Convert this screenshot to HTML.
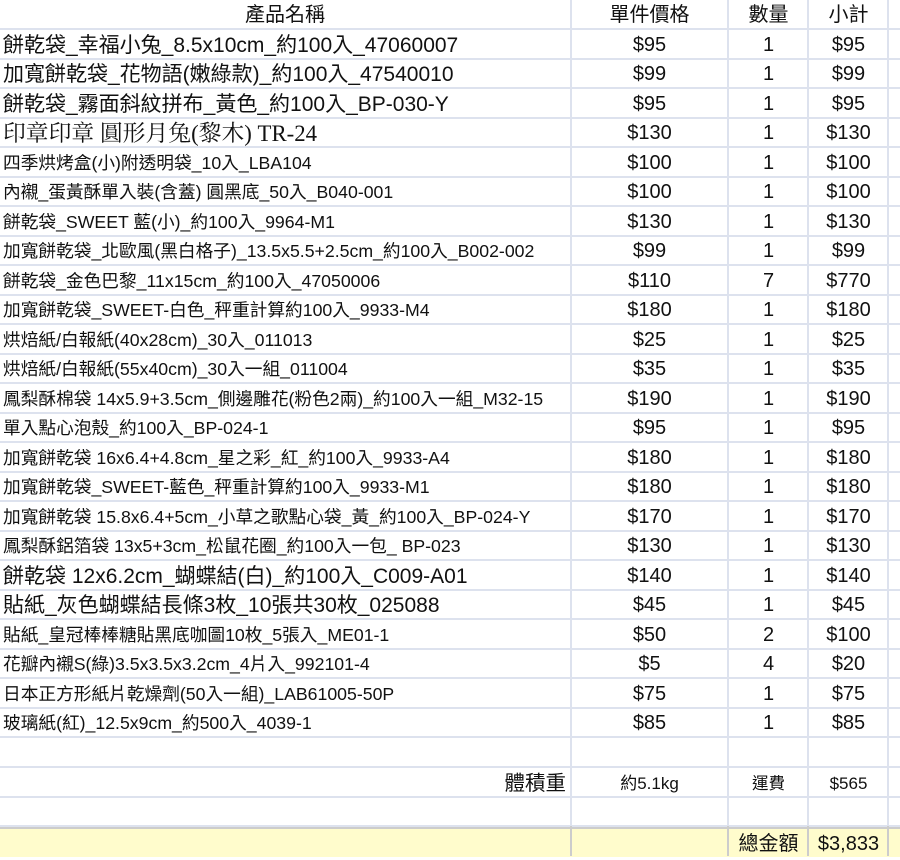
<!DOCTYPE html><html><head><meta charset="utf-8"><style>
body{margin:0;width:900px;height:856px;overflow:hidden;background:#fff;font-family:"Liberation Sans","Noto Sans CJK TC",sans-serif;color:#111;position:relative}
.r{position:absolute;left:0;width:900px;height:28px;border-bottom:2px solid #dde2ee}
.c{position:absolute;top:0;height:28px;line-height:31px;white-space:nowrap}
.n{left:3px;width:565px}
.p{left:572px;width:155px;text-align:center;font-size:20px}
.q{left:730px;width:77px;text-align:center;font-size:20px}
.s{left:810px;width:77px;text-align:center;font-size:20px}
.v{position:absolute;top:0;height:856px;width:2px;background:#dde2ee}
.b{font-size:21px}.m{font-size:17.7px}
</style></head><body>
<div class="v" style="left:570px"></div><div class="v" style="left:727px"></div><div class="v" style="left:807px"></div><div class="v" style="left:887px"></div>
<div id="t"></div>
<script>
var rows=[
["<span style='display:block;text-align:center;width:570px;margin-left:-3px;font-size:20px'>產品名稱</span>","<span style='font-size:20px'>單件價格</span>","<span style='font-size:20px'>數量</span>","<span style='font-size:20px'>小計</span>",""],
["餅乾袋_幸福小兔_8.5x10cm_約100入_47060007","$95","1","$95","b"],
["加寬餅乾袋_花物語(嫩綠款)_約100入_47540010","$99","1","$99","b"],
["餅乾袋_霧面斜紋拼布_黃色_約100入_BP-030-Y","$95","1","$95","b"],
["<span style='font-family:\"Liberation Serif\",\"Noto Serif CJK SC\",serif;font-size:22.8px'>印章印章 圓形月兔(黎木) TR-24</span>","$130","1","$130",""],
["四季烘烤盒(小)附透明袋_10入_LBA104","$100","1","$100","m"],
["內襯_蛋黃酥單入裝(含蓋) 圓黑底_50入_B040-001","$100","1","$100","m"],
["餅乾袋_SWEET 藍(小)_約100入_9964-M1","$130","1","$130","m"],
["加寬餅乾袋_北歐風(黑白格子)_13.5x5.5+2.5cm_約100入_B002-002","$99","1","$99","m"],
["餅乾袋_金色巴黎_11x15cm_約100入_47050006","$110","7","$770","m"],
["加寬餅乾袋_SWEET-白色_秤重計算約100入_9933-M4","$180","1","$180","m"],
["烘焙紙/白報紙(40x28cm)_30入_011013","$25","1","$25","m"],
["烘焙紙/白報紙(55x40cm)_30入一組_011004","$35","1","$35","m"],
["鳳梨酥棉袋 14x5.9+3.5cm_側邊雕花(粉色2兩)_約100入一組_M32-15","$190","1","$190","m"],
["單入點心泡殼_約100入_BP-024-1","$95","1","$95","m"],
["加寬餅乾袋 16x6.4+4.8cm_星之彩_紅_約100入_9933-A4","$180","1","$180","m"],
["加寬餅乾袋_SWEET-藍色_秤重計算約100入_9933-M1","$180","1","$180","m"],
["加寬餅乾袋 15.8x6.4+5cm_小草之歌點心袋_黃_約100入_BP-024-Y","$170","1","$170","m"],
["鳳梨酥鋁箔袋 13x5+3cm_松鼠花圈_約100入一包_ BP-023","$130","1","$130","m"],
["餅乾袋 12x6.2cm_蝴蝶結(白)_約100入_C009-A01","$140","1","$140","b"],
["貼紙_灰色蝴蝶結長條3枚_10張共30枚_025088","$45","1","$45","b"],
["貼紙_皇冠棒棒糖貼黑底咖圖10枚_5張入_ME01-1","$50","2","$100","m"],
["花瓣內襯S(綠)3.5x3.5x3.2cm_4片入_992101-4","$5","4","$20","m"],
["日本正方形紙片乾燥劑(50入一組)_LAB61005-50P","$75","1","$75","m"],
["玻璃紙(紅)_12.5x9cm_約500入_4039-1","$85","1","$85","m"],
["","","","",""],
["<span style='display:block;text-align:right;font-size:20.5px;padding-right:2px'>體積重</span>","<span style='font-size:17px'>約5.1kg</span>","<span style='font-size:16.5px'>運費</span>","<span style='font-size:17px'>$565</span>",""],
["","","","",""],
["","","<span style='font-size:20px'>總金額</span>","<span style='font-size:20px'>$3,833</span>",""]
];
var h="";
rows.forEach(function(r,i){
 var top=Math.round(i*29.52);
 var st=i==28?"background:#fffccc;border-top:2px solid #ccc;border-bottom:none;height:28px;":"";
 h+="<div class='r' style='top:"+top+"px;"+st+"'>"+
 "<div class='c n "+r[4]+"'>"+r[0]+"</div><div class='c p'>"+r[1]+"</div><div class='c q'>"+r[2]+"</div><div class='c s'>"+r[3]+"</div></div>";
});
document.getElementById("t").innerHTML=h;
</script>
<div class="v" style="left:570px;z-index:2;top:826px;height:30px;background:#ccc"></div><div class="v" style="left:727px;z-index:2;top:826px;height:30px;background:#ccc"></div><div class="v" style="left:807px;z-index:2;top:826px;height:30px;background:#ccc"></div><div class="v" style="left:887px;z-index:2;top:826px;height:30px;background:#ccc"></div>
</body></html>
